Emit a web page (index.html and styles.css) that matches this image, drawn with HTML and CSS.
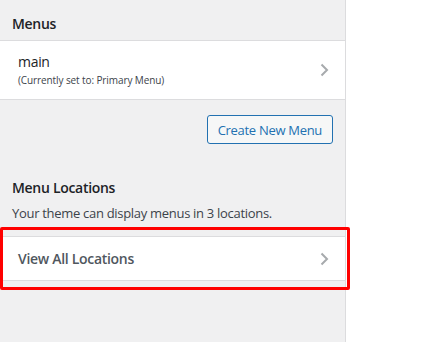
FILE: index.html
```html
<!DOCTYPE html>
<html>
  <head>
    <title>Menus</title>
    <link rel="stylesheet" href="styles.css">
  </head>
  <body>
    <div class="panel">
      <h3 class="panel-title">Menus</h3>
      <div class="menu-item">
        <div class="item-text">
          <div class="item-name">main</div>
          <div class="item-note">(Currently set to: Primary Menu)</div>
        </div>
        <svg class="chevron" width="9" height="14" viewBox="0 0 9 14">
          <polyline points="1.5,1.5 7,7 1.5,12.5" fill="none" stroke="#a7aaad" stroke-width="2" />
        </svg>
      </div>
      <div class="actions">
        <button class="button">Create New Menu</button>
      </div>
      <h3 class="section-title">Menu Locations</h3>
      <p class="description">Your theme can display menus in 3 locations.</p>
      <div class="locations">
        <div class="location-row">
          <span class="location-label">View All Locations</span>
          <svg class="chevron" width="9" height="14" viewBox="0 0 9 14">
            <polyline points="1.5,1.5 7,7 1.5,12.5" fill="none" stroke="#a7aaad" stroke-width="2" />
          </svg>
        </div>
        <div class="highlight"></div>
      </div>
    </div>
  </body>
</html>
```

FILE: styles.css
```css
body {
  margin: 0;
  background-color: #fff;
  font-family: "Open Sans", "Noto Sans", sans-serif;
  letter-spacing: -0.3px;
  color: #3c434a;
}

.panel {
  width: 345px;
  height: 342px;
  background-color: #f0f0f1;
  border-right: 1px solid #dcdcde;
}

.panel-title {
  margin: 0;
  padding: 14px 12px 0;
  height: 26px;
  font-size: 14px;
  font-weight: 600;
  color: #1d2327;
}

.menu-item {
  display: flex;
  align-items: center;
  justify-content: space-between;
  height: 58px;
  padding: 0 16px 0 18px;
  background-color: #fff;
  border-top: 1px solid #dcdcde;
  border-bottom: 1px solid #dcdcde;
}

.item-name {
  font-size: 14px;
  font-weight: 500;
  color: #1d2327;
  line-height: 20px;
}

.item-note {
  font-size: 10px;
  letter-spacing: -0.1px;
  color: #3c434a;
  line-height: 16px;
}

.actions {
  display: flex;
  justify-content: flex-end;
  padding: 15px 12px 0;
}

.button {
  height: 29px;
  padding: 0 10px;
  font-family: inherit;
  font-size: 13px;
  letter-spacing: -0.3px;
  color: #2271b1;
  background-color: #f6f7f7;
  border: 1px solid #2271b1;
  border-radius: 3px;
}

.section-title {
  margin: 0;
  padding: 34px 12px 0;
  font-size: 14px;
  font-weight: 600;
  color: #1d2327;
}

.description {
  margin: 7px 12px 0;
  font-size: 13px;
  color: #3c434a;
}

.locations {
  position: relative;
  margin-top: 14px;
}

.location-row {
  display: flex;
  align-items: center;
  justify-content: space-between;
  height: 43px;
  padding: 0 16px 0 18px;
  background-color: #fff;
  border-top: 1px solid #dcdcde;
  border-bottom: 1px solid #dcdcde;
}

.location-label {
  font-size: 14px;
  font-weight: 600;
  color: #50575e;
}

.chevron {
  display: block;
}

.highlight {
  position: absolute;
  top: -9px;
  bottom: -9px;
  left: 0;
  width: 344px;
  border: 3px solid #ff0000;
  border-radius: 2px;
}
```
